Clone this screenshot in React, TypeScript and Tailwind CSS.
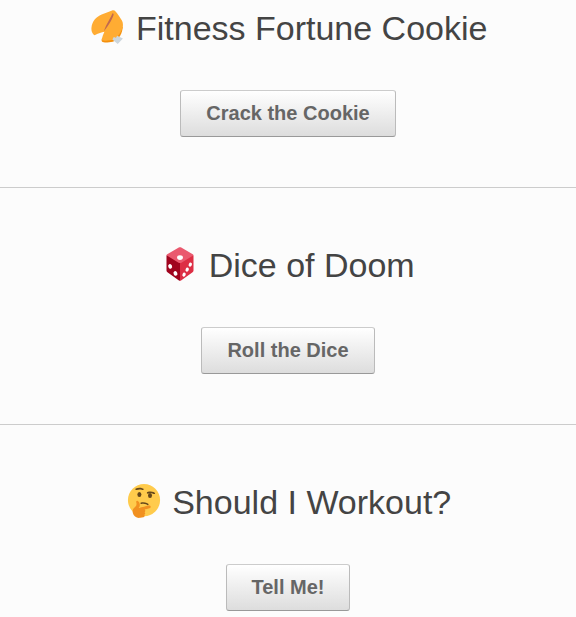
import type { ReactNode } from "react"

const iconClass = "mx-[2px] inline-block h-[34px] w-[34px] align-[-4px]"

function CookieIcon() {
  return (
    <svg viewBox="0 0 36 36" className={iconClass} aria-hidden="true">
      <path
        fill="#F4900C"
        d="M11.500 30.500c-.5 1.500-.4 2.900.8 3.300 3.500.9 8.700.9 12.500-.9 5.200-2.600 8.400-8.500 8.900-15.500z"
      />
      <path
        fill="#FFAC33"
        d="M22.300.4c1.500-.5 2.800 0 3.700 1.100 1.800 2.100 5.200 6.700 6.900 9.900 1.300 2.700 1.300 6.200-.2 9.500-1.600 3.500-4.400 7.400-7.800 9.500-3.300 1.900-8.300 2.400-11.800 1.900-1.300-.2-1.800-1-1.500-2 .5-2.200 1.400-4.500 2.600-7.200-3.100.5-6.500 1.700-9.300 3.200-1 .6-1.900.4-2.500-.5C.8 23.700.2 21.200.5 18.500 1.200 12.100 5.300 7.400 11.300 4.800 15 3.200 18.900 1.500 22.300.4z"
      />
      <path
        fill="#C1694F"
        d="M22.800 3.500c1 0 1.400.9 1 2-1.500 4.600-3.900 8.300-6.600 12.300-1.200 1.700-2.200 3.300-3.500 4.700.6-2.100 1.300-4 2.200-5.900 2.400-4.700 5.200-8.800 6.900-13.100z"
      />
      <path fill="#CCD6DD" d="M27.700 27.300l6.100 2.800-5.500 5.900-5.700-4.700 1.500-2.800 2.300.9z" />
    </svg>
  )
}

function DiceIcon() {
  return (
    <svg viewBox="0 0 36 36" className={iconClass} aria-hidden="true">
      <path fill="#DD2E44" d="M18 16l13.300-7.500c.6-.2 1 .1 1 .8v15.600c0 .8-.4 1.500-1 1.900l-12.200 8.600c-.4.300-.8.400-1.100.4z" />
      <path fill="#A0041E" d="M18 16L4.700 8.500c-.6-.2-1 .1-1 .8v15.600c0 .8.4 1.500 1 1.900l12.200 8.600c.4.300.8.400 1.100.4z" />
      <path fill="#EA596E" d="M16.700.6c.8-.5 1.800-.5 2.600 0l12.200 7.100c.8.500.8 1.100 0 1.600l-12 7.300c-.9.600-2.100.6-3 0l-12-7.300c-.8-.5-.8-1.100 0-1.600z" />
      <ellipse fill="#FFF" cx="18" cy="11.200" rx="3.100" ry="2.500" />
      <ellipse fill="#FFF" cx="7.600" cy="20.500" rx="2" ry="2.500" transform="rotate(-25 7.600 20.500)" />
      <ellipse fill="#FFF" cx="13.200" cy="28" rx="2" ry="2.500" transform="rotate(-25 13.200 28)" />
      <ellipse fill="#FFF" cx="22.300" cy="29.200" rx="1.700" ry="2.200" transform="rotate(25 22.300 29.200)" />
      <ellipse fill="#FFF" cx="25.600" cy="23.900" rx="1.700" ry="2.200" transform="rotate(25 25.600 23.900)" />
      <ellipse fill="#FFF" cx="28.900" cy="18.600" rx="1.700" ry="2.200" transform="rotate(25 28.900 18.600)" />
    </svg>
  )
}

function ThinkingIcon() {
  return (
    <svg viewBox="0 0 36 36" className={iconClass} aria-hidden="true">
      <circle fill="#FFCB4C" cx="18" cy="17.018" r="17" />
      <path
        fill="#65471B"
        d="M14.524 21.036c-.145-.116-.258-.274-.312-.464-.134-.46.13-.918.59-1.021 4.528-1.021 7.577 1.363 7.706 1.465.384.306.459.845.173 1.205-.286.358-.828.401-1.211.097-.11-.084-2.523-1.923-6.182-1.098-.274.061-.554-.016-.764-.184z"
      />
      <ellipse fill="#65471B" cx="13.119" cy="11.174" rx="2.125" ry="2.656" />
      <ellipse fill="#65471B" cx="24.375" cy="12.236" rx="2.125" ry="2.656" />
      <path
        fill="#F19020"
        d="M17.276 35.149s1.265-.411 1.429-1.352c.173-.972-.624-1.167-.624-1.167s1.041-.208 1.172-1.376c.123-1.101-.861-1.363-.861-1.363s.97-.4 1.016-1.539c.038-.959-.995-1.428-.995-1.428s5.038-1.221 5.556-1.341c.516-.12 1.32-.615 1.069-1.694-.249-1.08-1.204-1.118-1.697-1.003-.494.115-6.744 1.566-8.9 2.068l-1.439.334c-.54.127-.785-.11-.404-.512.508-.536.833-1.129.946-2.113.119-1.035-.232-2.313-.433-2.809-.374-.921-1.005-1.649-1.734-1.899-1.137-.39-1.945.321-1.542 1.561.604 1.854.208 3.375-.833 4.293-2.449 2.157-3.588 3.695-2.83 6.973.828 3.575 4.377 5.876 7.952 5.048l3.152-.681z"
      />
      <path
        fill="#65471B"
        d="M9.296 6.351c-.164-.088-.303-.224-.391-.399-.216-.428-.04-.927.393-1.112 4.266-1.831 7.699-.043 7.843.034.433.231.608.747.391 1.154-.216.405-.74.546-1.173.318-.123-.063-2.832-1.432-6.278.047-.257.109-.547.085-.785-.042zm12.135 3.75c-.156-.098-.286-.243-.362-.424-.187-.442.023-.927.468-1.084 4.381-1.536 7.685.48 7.823.567.415.26.555.787.312 1.178-.242.39-.776.495-1.191.238-.12-.072-2.727-1.621-6.267-.379-.266.091-.553.046-.783-.096z"
      />
    </svg>
  )
}

interface Game {
  title: string
  action: string
  icon: ReactNode
}

const games: Game[] = [
  { title: "Fitness Fortune Cookie", action: "Crack the Cookie", icon: <CookieIcon /> },
  { title: "Dice of Doom", action: "Roll the Dice", icon: <DiceIcon /> },
  { title: "Should I Workout?", action: "Tell Me!", icon: <ThinkingIcon /> },
]

export default function App() {
  return (
    <main className="min-h-screen w-full bg-[#fcfcfc] font-['Liberation_Sans',Arial,sans-serif]">
      {games.map((game) => (
        <section
          key={game.title}
          className="flex flex-col items-center gap-10 border-b border-[#cccccc] pt-[55px] pb-[50px] first:pt-[6px] last:border-b-0 last:pb-[6px]"
        >
          <h2 className="text-center text-[34px] leading-[44px] font-normal text-[#444444]">
            {game.icon} {game.title}
          </h2>
          <button
            type="button"
            className="cursor-pointer rounded-[3px] border border-[#bbbbbb] border-t-[#cccccc] border-b-[#999999] bg-linear-to-b from-white to-[#dddddd] px-[25px] py-2 text-[20px] leading-[29px] font-bold text-[#666666]"
          >
            {game.action}
          </button>
        </section>
      ))}
    </main>
  )
}
